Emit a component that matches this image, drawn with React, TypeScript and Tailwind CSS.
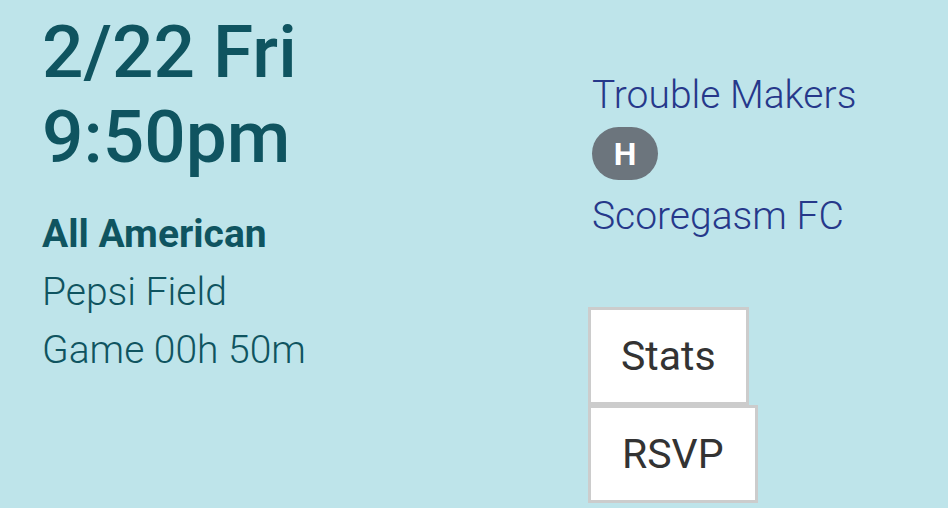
export default function App() {
  return (
    <div className="h-[508px] w-full overflow-hidden bg-[#bee4ea] font-['Roboto',sans-serif]">
      <div className="flex">
        <div className="w-[550px] pl-[42px] pt-[10px] text-[#0f5460]">
          <div className="text-[73px] font-medium leading-[85px]">
            <div>2/22 Fri</div>
            <div>9:50pm</div>
          </div>
          <div className="mt-[25px] text-[39px] leading-[58px]">
            <div className="font-bold">All American</div>
            <div className="font-light">Pepsi Field</div>
            <div className="font-light">Game 00h 50m</div>
          </div>
        </div>

        <div className="flex flex-col items-start pl-[42px] pt-[73px]">
          <div className="text-[39px] font-light leading-[44px] text-[#26388a]">Trouble Makers</div>
          <span className="mt-[10px] flex h-[53px] w-[66px] items-center justify-center rounded-full bg-[#6c757d] text-[32px] font-bold text-white">
            H
          </span>
          <div className="mt-[14px] text-[39px] font-light leading-[44px] text-[#26388a]">Scoregasm FC</div>

          <div className="mt-[69px] -ml-[4px] flex flex-col">
            <button className="self-start border-[3px] border-[#cccccc] bg-white px-[30px] py-[23px] text-[41px] leading-[46px] text-[#333333]">
              Stats
            </button>
            <button className="self-start border-[3px] border-[#cccccc] bg-white px-[31px] py-[23px] text-[41px] leading-[46px] text-[#333333]">
              RSVP
            </button>
          </div>
        </div>
      </div>
    </div>
  );
}
